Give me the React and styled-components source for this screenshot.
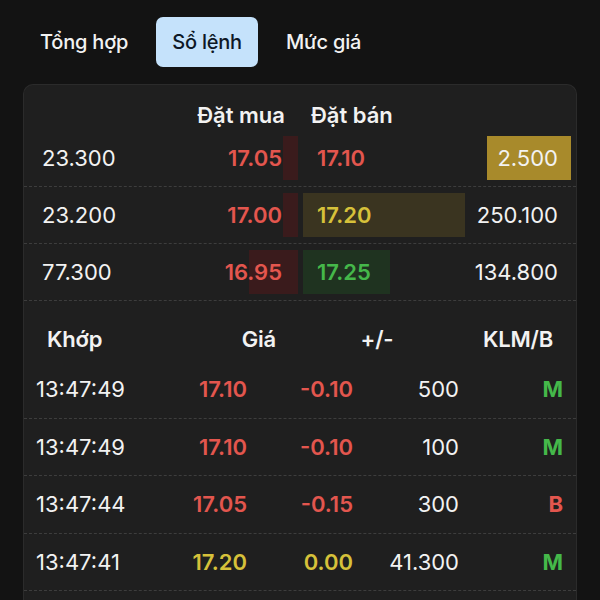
import React from 'react';
import styled, { createGlobalStyle } from 'styled-components';

const GlobalStyle = createGlobalStyle`
    body {
        margin: 0;
        background: #131313;
        font-family: Inter, "Noto Sans", "Liberation Sans", sans-serif;
        color: #f2f2f2;
    }
`;

const colors = {
    red: '#e3564e',
    yellow: '#d6c13a',
    green: '#45b84a',
    white: '#f2f2f2',
};

const bars = {
    red: '#3a1b1c',
    yellow: '#3a3420',
    green: '#1f3320',
    gold: '#a88a2b',
};

const book = [
    { bidVol: '23.300', bid: '17.05', bidBar: 15, ask: '17.10', askColor: 'red', askBar: 0, askVol: '2.500', volHighlight: true },
    { bidVol: '23.200', bid: '17.00', bidBar: 15, ask: '17.20', askColor: 'yellow', askBar: 162, barColor: 'yellow', askVol: '250.100' },
    { bidVol: '77.300', bid: '16.95', bidBar: 49, ask: '17.25', askColor: 'green', askBar: 87, barColor: 'green', askVol: '134.800' },
];

const trades = [
    { time: '13:47:49', price: '17.10', change: '-0.10', color: 'red', vol: '500', side: 'M' },
    { time: '13:47:49', price: '17.10', change: '-0.10', color: 'red', vol: '100', side: 'M' },
    { time: '13:47:44', price: '17.05', change: '-0.15', color: 'red', vol: '300', side: 'B' },
    { time: '13:47:41', price: '17.20', change: '0.00', color: 'yellow', vol: '41.300', side: 'M' },
];

const App = () => {
    return (
        <StPage>
            <GlobalStyle />
            <StTabs>
                <StTab>Tổng hợp</StTab>
                <StTab $active>Sổ lệnh</StTab>
                <StTab>Mức giá</StTab>
            </StTabs>

            <StCard>
                <StBookHead>
                    <span>Đặt mua</span>
                    <span>Đặt bán</span>
                </StBookHead>

                {book.map((row, i) => (
                    <StBookRow key={i}>
                        <StBidSide>
                            <StBar $color={bars.red} $side="right" style={{ width: row.bidBar }} />
                            <StVol>{row.bidVol}</StVol>
                            <StPrice $color={colors.red}>{row.bid}</StPrice>
                        </StBidSide>
                        <StAskSide>
                            {row.askBar > 0 && (
                                <StBar $color={bars[row.barColor]} $side="left" style={{ width: row.askBar }} />
                            )}
                            <StPrice $color={colors[row.askColor]}>{row.ask}</StPrice>
                            <StAskVol $highlight={row.volHighlight}>{row.askVol}</StAskVol>
                        </StAskSide>
                    </StBookRow>
                ))}

                <StTradeHead>
                    <span>Khớp</span>
                    <span>Giá</span>
                    <span>+/-</span>
                    <span>KLM/B</span>
                </StTradeHead>

                {trades.map((t, i) => (
                    <StTradeRow key={i}>
                        <StTime>{t.time}</StTime>
                        <StPrice $color={colors[t.color]}>{t.price}</StPrice>
                        <StPrice $color={colors[t.color]}>{t.change}</StPrice>
                        <StVol>{t.vol}</StVol>
                        <StSide $color={t.side === 'M' ? colors.green : colors.red}>{t.side}</StSide>
                    </StTradeRow>
                ))}
            </StCard>
        </StPage>
    );
};

const StPage = styled.div`
    height: 100vh;
    display: flex;
    flex-direction: column;
    overflow: hidden;
`

const StTabs = styled.div`
    display: flex;
    gap: 12px;
    padding: 17px 0 0 24px;
`

const StTab = styled.div`
    height: 50px;
    padding: 0 16px;
    display: flex;
    align-items: center;
    border-radius: 7px;
    font-size: 20px;
    font-weight: 500;
    letter-spacing: -0.2px;
    color: ${(props) => props.$active ? '#0e1826' : '#f2f2f2'};
    background-color: ${(props) => props.$active ? '#c5e2fb' : 'transparent'};
`

const StCard = styled.div`
    flex: 1;
    margin: 17px 23px 0;
    background-color: #1f1f1f;
    border: 1px solid #2b2b2b;
    border-bottom: none;
    border-radius: 10px 10px 0 0;
    overflow: hidden;
`

const StBookHead = styled.div`
    box-sizing: border-box;
    display: flex;
    justify-content: center;
    gap: 26px;
    height: 45px;
    padding: 14px 10px 0 0;
    align-items: center;
    font-size: 22px;
    font-weight: 600;
`

const StBookRow = styled.div`
    display: grid;
    grid-template-columns: 274px 268px;
    column-gap: 5px;
    padding: 6px 0;
    border-bottom: 1px dashed #3d3d3d;
`

const StBidSide = styled.div`
    position: relative;
    height: 44px;
    display: flex;
    align-items: center;
    justify-content: space-between;
    padding: 0 16px 0 18px;
`

const StAskSide = styled.div`
    position: relative;
    height: 44px;
    display: flex;
    align-items: center;
    justify-content: space-between;
    padding-left: 14px;
`

const StBar = styled.div`
    position: absolute;
    top: 0;
    bottom: 0;
    ${(props) => props.$side}: 0;
    background-color: ${(props) => props.$color};
`

const StVol = styled.span`
    position: relative;
    font-size: 22px;
    font-weight: 400;
    text-align: right;
`

const StPrice = styled.span`
    position: relative;
    font-size: 22px;
    font-weight: 600;
    text-align: right;
    color: ${(props) => props.$color};
`

const StAskVol = styled.span`
    position: relative;
    height: 44px;
    display: flex;
    align-items: center;
    font-size: 22px;
    padding: ${(props) => props.$highlight ? '0 13px 0 10px' : '0 13px 0 0'};
    background-color: ${(props) => props.$highlight ? bars.gold : 'transparent'};
`

const StTradeHead = styled.div`
    display: grid;
    grid-template-columns: 153px 76px 202px 1fr;
    padding: 16px 23px 0 23px;
    height: 44px;
    font-size: 22px;
    font-weight: 600;
    letter-spacing: -0.2px;
    align-items: center;

    span:nth-child(2), span:nth-child(4) { text-align: right; }
    span:nth-child(3) { text-align: center; }
`

const StTradeRow = styled.div`
    display: grid;
    grid-template-columns: 115px 96px 106px 106px 1fr;
    align-items: center;
    height: 56.5px;
    padding: 0 13px 0 12px;
    border-bottom: 1px dashed #3d3d3d;
`

const StTime = styled.span`
    font-size: 22px;
    font-weight: 400;
`

const StSide = styled.span`
    font-size: 22px;
    font-weight: 700;
    text-align: right;
    color: ${(props) => props.$color};
`

export default App;
